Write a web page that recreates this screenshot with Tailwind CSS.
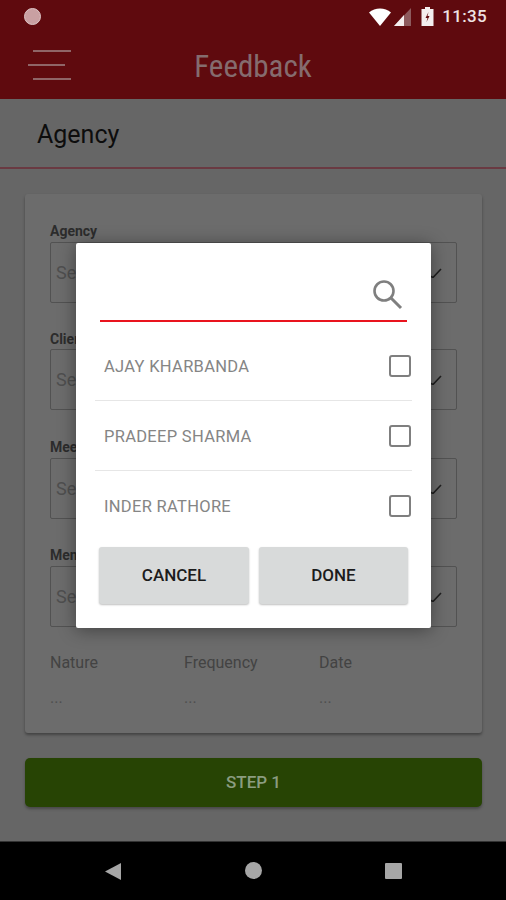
<!DOCTYPE html>
<html lang="en">
<head>
    <meta charset="UTF-8">
    <meta name="viewport" content="width=device-width, initial-scale=1.0">
    <title>Feedback</title>
    <script src="https://cdn.jsdelivr.net/npm/@tailwindcss/browser@4"></script>
</head>
<body class="font-['Roboto',sans-serif]">
<div class="relative w-[506px] h-[900px] overflow-hidden bg-[#666666] flex flex-col">

    <!-- status bar + toolbar -->
    <header class="h-[99px] shrink-0 bg-[#5f0a0e] flex flex-col">
        <div class="h-[33px] flex items-center pl-[24px] pr-[19px]">
            <div class="w-[17px] h-[17px] rounded-full bg-[#c9a0a2] border border-[#dcc5c6]"></div>
            <div class="ml-auto flex items-center">
                <svg width="22" height="18" viewBox="0 0 22 18"><path d="M0 4.5C6 -1 16 -1 22 4.5L11 18Z" fill="#fff"/></svg>
                <svg class="ml-[3px]" width="17" height="18" viewBox="0 0 17 18"><path d="M17 0V18H0Z" fill="#8d5a5d"/><path d="M10 7V18H0Z" fill="#f4eeee"/></svg>
                <svg class="ml-[10px]" width="13" height="19" viewBox="0 0 13 19"><path d="M4 0H9V2H12.5V19H0.5V2H4Z" fill="#f4eeee"/><path d="M7.5 5L4.5 11H6.5L5.5 15L8.5 9H6.5Z" fill="#5f0a0e"/></svg>
                <span class="ml-[8px] text-[17px] font-medium leading-none text-[#eee3e3] tracking-[0.3px]">11:35</span>
            </div>
        </div>
        <div class="relative h-[66px] flex items-center justify-center">
            <div class="absolute left-[28px] top-[17px] w-[43px] flex flex-col gap-[12px]">
                <div class="ml-[5px] w-[38px] h-[2px] bg-[#8f6567]"></div>
                <div class="w-[37px] h-[2px] bg-[#8f6567]"></div>
                <div class="ml-[5px] w-[38px] h-[2px] bg-[#8f6567]"></div>
            </div>
            <span class="font-['Roboto_Condensed','Roboto',sans-serif] text-[31px] leading-none text-[#856c6e]">Feedback</span>
        </div>
    </header>

    <!-- section title -->
    <div class="h-[70px] shrink-0 pl-[37px] pt-[21px] border-b-2 border-[#6a3a42]">
        <span class="text-[25px] leading-[30px] text-[#0d0d0d]">Agency</span>
    </div>

    <main class="flex-1 flex flex-col pl-[25px] pr-[24px] pt-[25px]">
        <!-- form card -->
        <section class="h-[539px] bg-[#6c6c6c] rounded-[3px] shadow-[0_2px_3px_rgba(0,0,0,0.35)] pl-[25px] pr-[25px] pt-[29px]">
            <div class="h-[108px]">
                <p class="text-[14px] leading-[16px] font-bold text-[#2c2c2c]">Agency</p>
                <div class="mt-[3px] h-[61px] border border-[#525252] rounded-[2px] flex items-center pl-[5px] pr-[14px]">
                    <span class="text-[18px] text-[#4f4f4f]">Select</span>
                    <svg class="ml-auto" width="12" height="10" viewBox="0 0 12 10"><path d="M0 8L3 9.5L11 1" stroke="#1f1f1f" stroke-width="1.6" fill="none"/></svg>
                </div>
            </div>
            <div class="h-[108px]">
                <p class="text-[14px] leading-[16px] font-bold text-[#2c2c2c]">Client</p>
                <div class="mt-[2px] h-[61px] border border-[#525252] rounded-[2px] flex items-center pl-[5px] pr-[14px]">
                    <span class="text-[18px] text-[#4f4f4f]">Select</span>
                    <svg class="ml-auto" width="12" height="10" viewBox="0 0 12 10"><path d="M0 8L3 9.5L11 1" stroke="#1f1f1f" stroke-width="1.6" fill="none"/></svg>
                </div>
            </div>
            <div class="h-[108px]">
                <p class="text-[14px] leading-[16px] font-bold text-[#2c2c2c]">Meeting</p>
                <div class="mt-[3px] h-[61px] border border-[#525252] rounded-[2px] flex items-center pl-[5px] pr-[14px]">
                    <span class="text-[18px] text-[#4f4f4f]">Select</span>
                    <svg class="ml-auto" width="12" height="10" viewBox="0 0 12 10"><path d="M0 8L3 9.5L11 1" stroke="#1f1f1f" stroke-width="1.6" fill="none"/></svg>
                </div>
            </div>
            <div class="h-[107px]">
                <p class="text-[14px] leading-[16px] font-bold text-[#2c2c2c]">Member</p>
                <div class="mt-[3px] h-[61px] border border-[#525252] rounded-[2px] flex items-center pl-[5px] pr-[14px]">
                    <span class="text-[18px] text-[#4f4f4f]">Select</span>
                    <svg class="ml-auto" width="12" height="10" viewBox="0 0 12 10"><path d="M0 8L3 9.5L11 1" stroke="#1f1f1f" stroke-width="1.6" fill="none"/></svg>
                </div>
            </div>
            <div class="flex text-[16px] leading-[18px] text-[#434343]">
                <div class="w-[134px]"><p>Nature</p><p class="mt-[17px] text-[#4f4f4f]">...</p></div>
                <div class="w-[135px]"><p>Frequency</p><p class="mt-[17px] text-[#4f4f4f]">...</p></div>
                <div><p>Date</p><p class="mt-[17px] text-[#4f4f4f]">...</p></div>
            </div>
        </section>

        <button class="mt-[25px] h-[49px] rounded-[5px] bg-[#274404] shadow-[0_2px_3px_rgba(0,0,0,0.3)] text-[17px] font-medium text-[#8b9c80]">STEP 1</button>
    </main>

    <!-- nav bar -->
    <nav class="relative h-[59px] shrink-0 bg-black border-t border-[#333]">
        <svg class="absolute left-[105px] top-[21px]" width="16" height="17" viewBox="0 0 16 17"><path d="M16 0V17L0 8.5Z" fill="#a6a6a6"/></svg>
        <div class="absolute left-[245px] top-[20px] w-[17px] h-[17px] rounded-full bg-[#a6a6a6]"></div>
        <div class="absolute left-[385px] top-[21px] w-[17px] h-[16px] rounded-[1px] bg-[#a6a6a6]"></div>
    </nav>

    <!-- picker dialog -->
    <div class="absolute left-[76px] top-[243px] w-[355px] h-[385px] bg-white rounded-[2px] shadow-[0_2px_18px_rgba(0,0,0,0.4)]">
        <div class="relative mx-[24px] h-[79px] border-b-2 border-[#e9141e]">
            <svg class="absolute left-[272px] top-[37px]" width="31" height="30" viewBox="0 0 31 30" fill="none" stroke="#7f7f7f"><circle cx="12" cy="11" r="9.5" stroke-width="2.6"/><path d="M19 18L29 28" stroke-width="3"/></svg>
        </div>
        <ul class="mx-[19px] text-[16.5px] tracking-[0.3px] text-[#858585]">
            <li class="h-[79px] pt-[10px] flex items-center justify-between pl-[9px] border-b border-[#e6e6e6]">
                <span class="mt-[2px]">AJAY KHARBANDA</span>
                <span class="w-[22px] h-[22px] mr-[1px] border-2 border-[#7f7f7f] rounded-[3px]"></span>
            </li>
            <li class="h-[70px] flex items-center justify-between pl-[9px] border-b border-[#e6e6e6]">
                <span class="mt-[4px]">PRADEEP SHARMA</span>
                <span class="w-[22px] h-[22px] mr-[1px] border-2 border-[#7f7f7f] rounded-[3px]"></span>
            </li>
            <li class="h-[70px] flex items-center justify-between pl-[9px]">
                <span class="mt-[2px]">INDER RATHORE</span>
                <span class="w-[22px] h-[22px] mr-[1px] border-2 border-[#7f7f7f] rounded-[3px]"></span>
            </li>
        </ul>
        <div class="mt-[6px] ml-[23px] flex gap-[10px]">
            <button class="w-[150px] h-[57px] rounded-[3px] bg-[#d8dada] shadow-[0_1px_2px_rgba(0,0,0,0.25)] text-[17px] font-medium text-[#1c1c1c]">CANCEL</button>
            <button class="w-[149px] h-[57px] rounded-[3px] bg-[#d8dada] shadow-[0_1px_2px_rgba(0,0,0,0.25)] text-[17px] font-medium text-[#1c1c1c]">DONE</button>
        </div>
    </div>
</div>
</body>
</html>
